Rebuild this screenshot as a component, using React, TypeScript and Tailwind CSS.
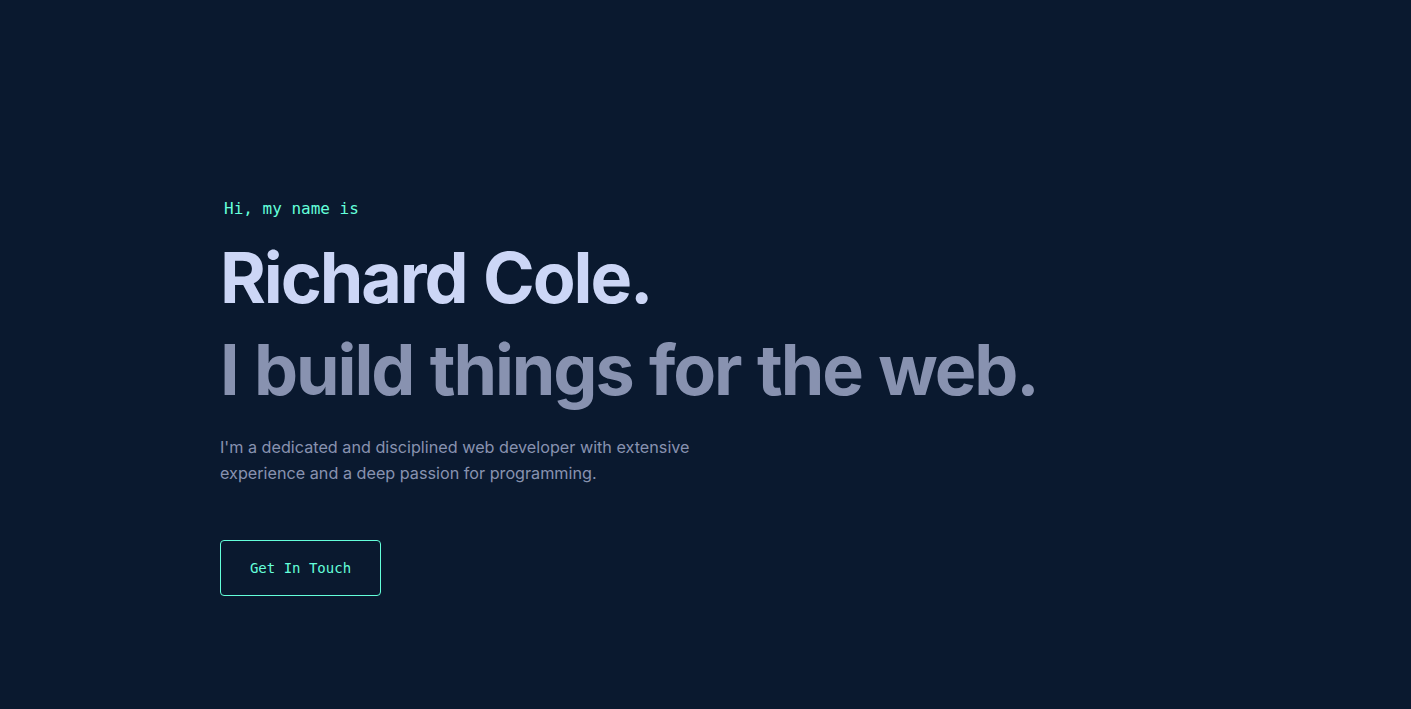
export default function App() {
  const mono = "font-['DejaVu_Sans_Mono','Liberation_Mono',monospace]";
  return (
    <div className="min-h-screen w-full bg-[#0a192f] font-['Inter','Noto_Sans',sans-serif]">
      <section className="flex min-h-[709px] flex-col pl-[220px] pt-[201px]">
        <h1 className={`${mono} pl-1 text-[16px] leading-none text-[#64ffda]`}>Hi, my name is</h1>
        <h2 className="mt-[22px] text-[70px] font-bold leading-[1.1] tracking-[-0.03em] [word-spacing:2px] text-[#ccd6f6]">
          Richard Cole.
        </h2>
        <h3 className="mt-[15px] text-[70px] font-bold leading-[1.1] tracking-[-0.03em] [word-spacing:2px] text-[#8892b0]">
          I build things for the web.
        </h3>
        <p className="mt-[26px] max-w-[540px] text-[16.2px] leading-[26px] text-[#8892b0]">
          I'm a dedicated and disciplined web developer with extensive experience and a deep passion for
          programming.
        </p>
        <div className="mt-[54px]">
          <a
            href="#contact"
            className={`${mono} inline-flex h-[56px] w-[161px] items-center justify-center rounded-[4px] border border-[#64ffda] text-[14px] text-[#64ffda]`}
          >
            Get In Touch
          </a>
        </div>
      </section>
    </div>
  );
}
